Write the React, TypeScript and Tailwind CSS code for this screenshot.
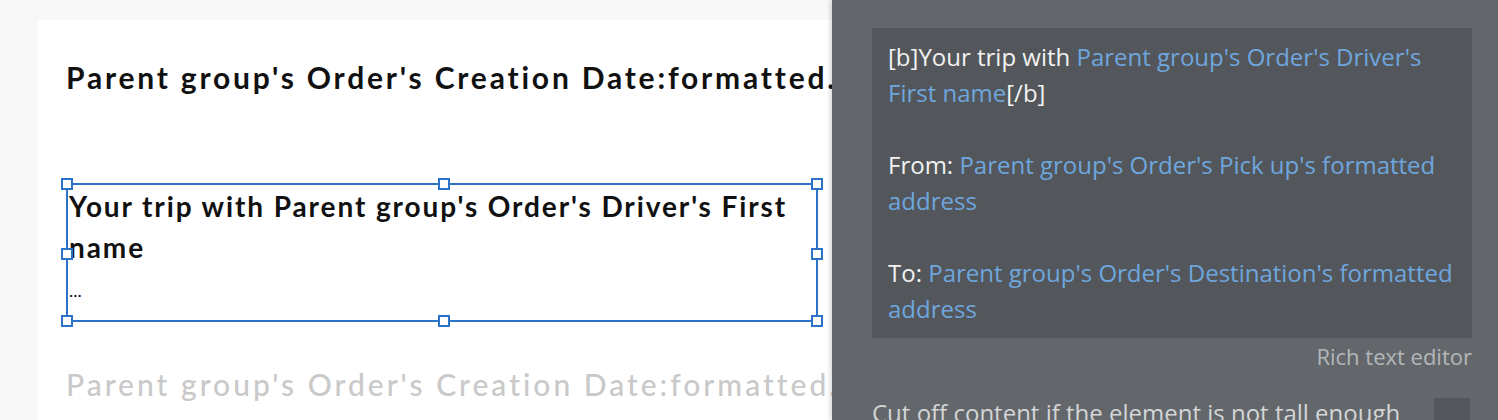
import React from 'react';

const lato = { fontFamily: 'Lato, "Liberation Sans", sans-serif' };

const Handle: React.FC<{ className: string }> = ({ className }) => (
  <div className={`absolute w-[12px] h-[12px] bg-white border-2 border-[#2b72c8] ${className}`} />
);

const PropertyPanel: React.FC = () => (
  <div
    className="absolute top-0 right-0 w-[666px] h-[420px] bg-[#63676b] shadow-[-2px_0_4px_rgba(0,0,0,0.15)] overflow-hidden flex flex-col px-[26px] pt-[28px]"
    style={{ fontFamily: '"Open Sans", "Liberation Sans", sans-serif' }}
  >
    <div className="w-[600px] ml-[14px] bg-[#53575b] px-[16px] py-[11px] text-[24px] leading-[36px] text-[#f2f2f2]">
      <p>
        [b]Your trip with <span className="text-[#6ea6de]">Parent group's Order's Driver's First name</span>[/b]
      </p>
      <p>&nbsp;</p>
      <p>
        From: <span className="text-[#6ea6de]">Parent group's Order's Pick up's formatted address</span>
      </p>
      <p>&nbsp;</p>
      <p>
        To: <span className="text-[#6ea6de]">Parent group's Order's Destination's formatted address</span>
      </p>
    </div>
    <div className="w-[614px] text-right text-[22px] leading-[36px] text-[#b4b7ba]">
      Rich text editor
    </div>
    <div className="flex items-start justify-between w-[600px] ml-[14px] mt-[24px]">
      <span className="text-[24px] leading-[30px] text-[#d4d5d6] whitespace-nowrap">
        Cut off content if the element is not tall enough
      </span>
      <div className="w-[36px] h-[36px] bg-[#53575b] mr-[2px]" />
    </div>
  </div>
);

export default function App() {
  return (
    <div className="relative w-[1498px] h-[420px] overflow-hidden bg-[#f8f8f8]">
      <div className="ml-[38px] mt-[20px] w-[1000px] h-[420px] bg-white pl-[28px]" style={lato}>
        <h1 className="pt-[39px] text-[30px] leading-[36px] font-bold tracking-[2.8px] text-[#111] whitespace-nowrap">
          Parent group's Order's Creation Date:formatted...
        </h1>

        <div className="relative mt-[88px] w-[752px] h-[139px] border-2 border-[#2b72c8]">
          <div className="pl-[1px] pt-[1px] text-[#111]">
            <p className="text-[28px] leading-[41px] font-bold tracking-[1.9px]">
              Your trip with Parent group's Order's Driver's First name
            </p>
            <p className="text-[18px] leading-[44px] font-normal">...</p>
          </div>
          <Handle className="-left-[7px] -top-[7px]" />
          <Handle className="left-[370px] -top-[7px]" />
          <Handle className="-right-[7px] -top-[7px]" />
          <Handle className="-left-[7px] top-[63px]" />
          <Handle className="-right-[7px] top-[63px]" />
          <Handle className="-left-[7px] -bottom-[7px]" />
          <Handle className="left-[370px] -bottom-[7px]" />
          <Handle className="-right-[7px] -bottom-[7px]" />
        </div>

        <h2 className="mt-[44px] text-[30px] leading-[36px] font-medium tracking-[3px] text-[#c9c9c9] whitespace-nowrap">
          Parent group's Order's Creation Date:formatted...
        </h2>
      </div>

      <PropertyPanel />
    </div>
  );
}
